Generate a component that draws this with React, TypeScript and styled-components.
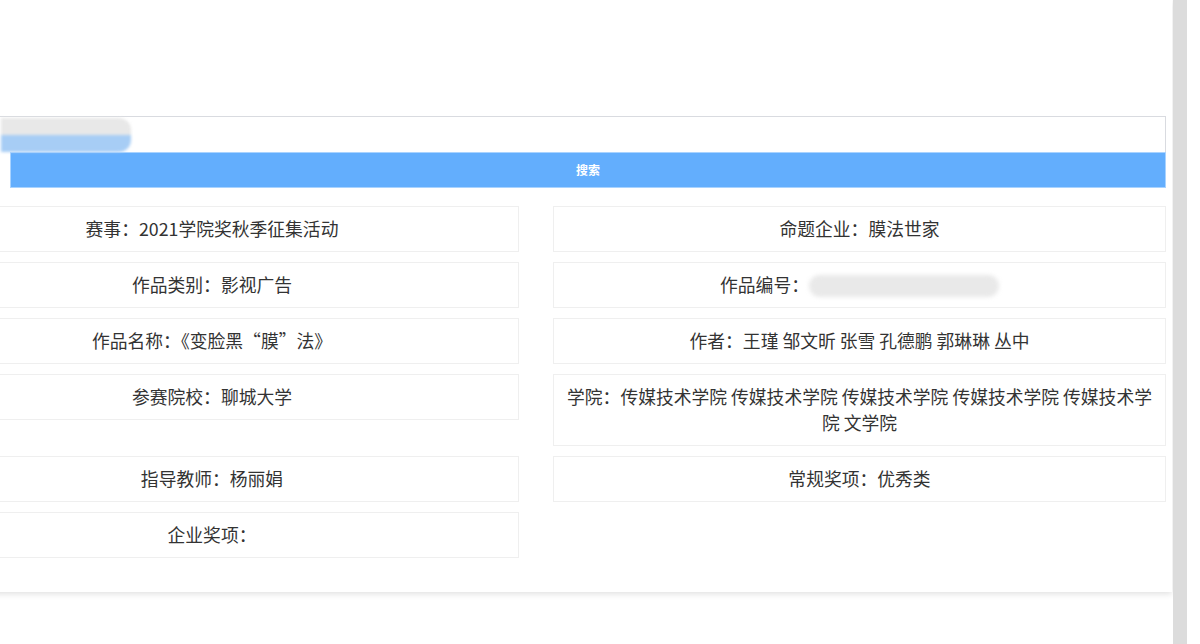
import React from "react";
import styled, { createGlobalStyle } from "styled-components";

const Global = createGlobalStyle`
  html, body { margin: 0; padding: 0; background: #ffffff; }
  body { font-family: "Noto Sans CJK SC", "Noto Sans", "Liberation Sans", sans-serif; overflow: hidden; }
  * { box-sizing: border-box; }
`;

const Page = styled.div`
  display: flex;
  width: 1200px;
  height: 644px;
  overflow: hidden;
  background: #ffffff;
`;

const Viewport = styled.div`
  flex: 0 0 1173px;
  overflow: hidden;
`;

const Card = styled.div`
  margin-left: -95px;
  width: 1267px;
  height: 592px;
  padding-top: 116px;
  background: #ffffff;
  box-shadow: 0 2px 6px rgba(0, 0, 0, 0.12);
`;

const Form = styled.div`
  width: 1261px;
  display: flex;
  flex-direction: column;
`;

const SearchInput = styled.div`
  height: 36px;
  border: 1px solid #d9dbe0;
  border-bottom: none;
  background: #fff;
  display: flex;
  align-items: center;
  padding-left: 95px;
`;

const Blob = styled.span<{ $w: number; $h: number; $c: string }>`
  display: inline-block;
  width: ${(p) => p.$w}px;
  height: ${(p) => p.$h}px;
  background: ${(p) => p.$c};
  border-radius: 14px;
  filter: blur(2px);
  vertical-align: middle;
  margin: -8px 0 -6px;
`;

const InputBlob = styled.span`
  display: flex;
  flex-direction: column;
  width: 130px;
  height: 34px;
  filter: blur(1.5px);
  span:first-child { flex: 1; background: #e8e8e8; border-radius: 0 12px 0 0; }
  span:last-child { flex: 1; background: #a7cdf5; border-radius: 0 0 12px 0; }
`;

const SearchButton = styled.button`
  margin-left: 105px;
  height: 36px;
  border: 1px solid #a9d3ff;
  background: #63aefd;
  color: #fff;
  font-family: inherit;
  font-size: 12px;
  font-weight: 700;
  padding: 0 0 2px;
  cursor: pointer;
`;

const Grid = styled.div`
  margin-top: 18px;
  display: grid;
  grid-template-columns: 614px 613px;
  column-gap: 34px;
  row-gap: 10px;
  align-items: start;
`;

const Cell = styled.div`
  border: 1px solid #efefef;
  background: #fff;
  padding: 8px 10px 10px;
  text-align: center;
  font-size: 17.8px;
  line-height: 26px;
  color: #333;
  height: auto;
  min-height: 46px;
`;

const Spacer = styled.div``;

const ScrollTrack = styled.div`
  flex: 0 0 14px;
  height: 644px;
  background: #dcdcdc;
`;

export default function App() {
  return (
    <>
      <Global />
      <Page>
        <Viewport>
          <Card>
            <Form>
              <SearchInput>
                <InputBlob>
                  <span />
                  <span />
                </InputBlob>
              </SearchInput>
              <SearchButton>搜索</SearchButton>
              <Grid>
                <Cell>赛事：2021学院奖秋季征集活动</Cell>
                <Cell>命题企业：膜法世家</Cell>
                <Cell>作品类别：影视广告</Cell>
                <Cell>
                  作品编号：<Blob $w={190} $h={22} $c="#e9e9e9" />
                </Cell>
                <Cell>作品名称：《变脸黑“膜”法》</Cell>
                <Cell>作者：王瑾 邹文昕 张雪 孔德鹏 郭琳琳 丛中</Cell>
                <Cell>参赛院校：聊城大学</Cell>
                <Cell>学院：传媒技术学院 传媒技术学院 传媒技术学院 传媒技术学院 传媒技术学院 文学院</Cell>
                <Cell>指导教师：杨丽娟</Cell>
                <Cell>常规奖项：优秀类</Cell>
                <Cell>企业奖项：</Cell>
                <Spacer />
              </Grid>
            </Form>
          </Card>
        </Viewport>
        <ScrollTrack />
      </Page>
    </>
  );
}
